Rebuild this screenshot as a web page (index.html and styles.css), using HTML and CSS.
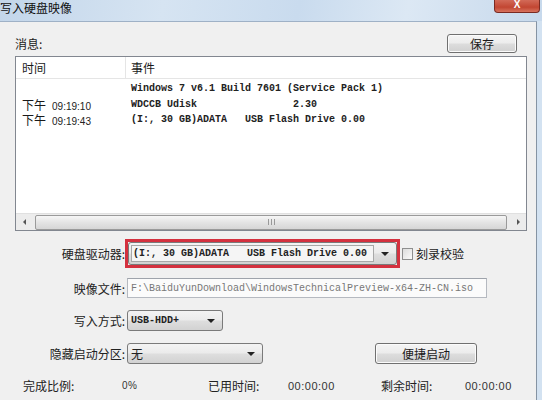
FILE: index.html
```html
<!DOCTYPE html>
<html lang="zh-CN">
<head>
    <meta charset="UTF-8">
    <title>写入硬盘映像</title>
    <link rel="stylesheet" href="styles.css">
</head>
<body>
<div class="window">
    <!--标题栏-->
    <div class="titlebar">
        <span class="title">写入硬盘映像</span>
        <span class="close">X</span>
    </div>
    <div class="client">
        <!--消息-->
        <div class="msg-head">
            <span>消息:</span>
            <span class="btn save">保存</span>
        </div>
        <div class="list">
            <div class="list-head">
                <span class="col-time">时间</span>
                <span class="col-event">事件</span>
            </div>
            <div class="list-rows">
                <div class="row"><span class="col-time"></span><span class="col-event">Windows 7 v6.1 Build 7601 (Service Pack 1)</span></div>
                <div class="row"><span class="col-time">下午<i>09:19:10</i></span><span class="col-event">WDCCB Udisk                2.30</span></div>
                <div class="row"><span class="col-time">下午<i>09:19:43</i></span><span class="col-event">(I:, 30 GB)ADATA   USB Flash Drive 0.00</span></div>
            </div>
            <div class="hscroll">
                <span class="arrow left"></span>
                <span class="thumb"><b></b></span>
                <span class="arrow right"></span>
            </div>
        </div>
        <!--设置-->
        <div class="form">
            <div class="form-row first">
                <span class="label">硬盘驱动器:</span>
                <span class="mark">
                    <span class="combo drive">
                        <span class="combo-text">(I:, 30 GB)ADATA   USB Flash Drive 0.00</span>
                        <span class="combo-btn"><em></em></span>
                    </span>
                </span>
                <span class="check"></span>
                <span class="check-text">刻录校验</span>
            </div>
            <div class="form-row">
                <span class="label">映像文件:</span>
                <span class="textbox">F:\BaiduYunDownload\WindowsTechnicalPreview-x64-ZH-CN.iso</span>
            </div>
            <div class="form-row">
                <span class="label">写入方式:</span>
                <span class="combo plain mode">
                    <span class="combo-text">USB-HDD+</span>
                    <span class="combo-btn"><em></em></span>
                </span>
            </div>
            <div class="form-row">
                <span class="label">隐藏启动分区:</span>
                <span class="combo plain hide">
                    <span class="combo-text cn">无</span>
                    <span class="combo-btn"><em></em></span>
                </span>
                <span class="btn quick">便捷启动</span>
            </div>
        </div>
        <!--进度-->
        <div class="status">
            <span>完成比例:</span>
            <span class="num small">0%</span>
            <span>已用时间:</span>
            <span class="num">00:00:00</span>
            <span>剩余时间:</span>
            <span class="num">00:00:00</span>
        </div>
    </div>
</div>
</body>
</html>
```

FILE: styles.css
```css
*{
    margin: 0;
    padding: 0;
    box-sizing: border-box;
}
body{
    width: 542px;
    height: 400px;
    overflow: hidden;
    background-color: #d3e2f1;
    font-family: "Noto Sans CJK SC", "Liberation Sans", sans-serif;
    font-size: 12px;
    color: #1a1a1a;
}
.window{
    height: 400px;
    display: flex;
    flex-direction: column;
}
/* 标题栏 */
.titlebar{
    height: 21px;
    display: flex;
    justify-content: space-between;
    align-items: flex-start;
    background: linear-gradient(100deg, #c3d6ea 0%, #d6e4f2 30%, #c9dbee 55%, #dce8f4 75%, #c7d9ec 100%);
}
.title{
    line-height: 16px;
    color: #111;
}
.close{
    width: 46px;
    height: 13px;
    margin-right: 2px;
    border: 1px solid #7a2a22;
    border-top: none;
    border-radius: 0 0 4px 4px;
    background: linear-gradient(#d26a58, #c24632 60%, #d7735e);
    color: #fff;
    font: bold 10px/9px "Liberation Sans", sans-serif;
    text-align: center;
}
.client{
    flex: 1;
    margin-right: 5px;
    padding: 0 9px 0 15px;
    background-color: #f0f0f0;
    border-top: 1px solid #9fb1c6;
    border-right: 1px solid #8593a3;
}
.msg-head{
    margin-top: 12px;
    display: flex;
    justify-content: space-between;
    align-items: center;
}
.btn{
    display: flex;
    align-items: center;
    justify-content: center;
    border: 1px solid #707070;
    border-radius: 3px;
    background: linear-gradient(#f4f4f4, #ececec 48%, #dddddd 52%, #d0d0d0);
    box-shadow: inset 0 0 0 1px #fbfbfb;
}
.save{
    width: 70px;
    height: 19px;
    margin-right: 10px;
}
/* 列表 */
.list{
    margin-top: 3px;
    height: 175px;
    border: 1px solid #828790;
    background-color: #fff;
    display: flex;
    flex-direction: column;
}
.list-head{
    height: 22px;
    display: grid;
    grid-template-columns: 110px 1fr;
    align-items: center;
    border-bottom: 1px solid #e5e5e5;
}
.list-head .col-time{
    height: 100%;
    display: flex;
    align-items: center;
    border-right: 1px solid #e5e5e5;
}
.col-time{
    padding-left: 6px;
}
.col-event{
    padding-left: 5px;
}
.list-rows{
    flex: 1;
    padding-top: 2px;
}
.row{
    display: grid;
    grid-template-columns: 110px 1fr;
    height: 15.5px;
    line-height: 15.5px;
}
.row .col-time{
    font-size: 12px;
}
.row .col-time i{
    font-style: normal;
    font-family: "Liberation Sans", sans-serif;
    font-size: 10px;
    margin-left: 6px;
    color: #222;
}
.row .col-event{
    font-family: "Liberation Mono", monospace;
    font-size: 10px;
    font-weight: bold;
    white-space: pre;
    color: #222;
}
.hscroll{
    height: 17px;
    display: flex;
    align-items: center;
    background-color: #ececec;
    border-top: 1px solid #e0e0e0;
}
.arrow{
    width: 17px;
    height: 16px;
    position: relative;
}
.arrow.left::after,
.arrow.right::after{
    content: "";
    position: absolute;
    top: 5px;
    border: 3px solid transparent;
}
.arrow.left::after{
    left: 4px;
    border-right: 3px solid #555;
}
.arrow.right::after{
    left: 8px;
    border-left: 3px solid #555;
}
.thumb{
    height: 15px;
    margin: 0 2px;
    flex: 1;
    border: 1px solid #9a9a9a;
    border-radius: 2px;
    background: linear-gradient(#f6f6f6, #e4e4e4 50%, #d6d6d6);
    display: flex;
    justify-content: center;
    align-items: center;
}
.thumb b{
    width: 7px;
    height: 6px;
    border-left: 1px solid #999;
    border-right: 1px solid #999;
    background: linear-gradient(90deg, transparent 2px, #999 2px, #999 3px, transparent 3px);
}
/* 表单 */
.form{
    margin-top: 8px;
}
.form-row{
    display: flex;
    align-items: center;
    margin-top: 12px;
}
.form-row.first{
    margin-top: 0;
}
.form-row:nth-child(2){
    margin-top: 10px;
}
.label{
    width: 110px;
    text-align: right;
    color: #222;
}
.mark{
    border: 3px solid #d4313f;
    display: flex;
}
.combo{
    display: flex;
    height: 23px;
    border: 1px solid #7a7a7a;
    border-radius: 3px;
    background: linear-gradient(#f3f3f3, #ebebeb 48%, #dedede 52%, #d2d2d2);
}
.combo-text{
    flex: 1;
    padding-left: 3px;
    display: flex;
    align-items: center;
    font-family: "Liberation Mono", monospace;
    font-size: 10px;
    font-weight: bold;
    white-space: pre;
    color: #222;
}
.combo-text.cn{
    font-family: "Noto Sans CJK SC", sans-serif;
    font-size: 12px;
    font-weight: normal;
}
.combo-btn{
    width: 22px;
    display: flex;
    align-items: center;
    justify-content: center;
}
.combo-btn em{
    border: 4px solid transparent;
    border-top: 4px solid #222;
    border-bottom: none;
    margin-top: 1px;
}
.drive{
    width: 269px;
}
.drive .combo-text{
    margin: 2px 0 2px 2px;
    padding-left: 1px;
    border: 1px solid #a8a8a8;
    background-color: #f5f5f5;
}
.plain{
    height: 21px;
    margin-left: 2px;
}
.mode{
    width: 96px;
}
.hide{
    width: 136px;
}
.check{
    width: 11px;
    height: 12px;
    margin-left: 2px;
    border: 1px solid #8e8f8f;
    background: linear-gradient(135deg, #dcdcdc, #fbfbfb);
}
.check-text{
    margin-left: 3px;
}
.textbox{
    width: 360px;
    height: 20px;
    margin-left: 2px;
    padding-left: 3px;
    display: flex;
    align-items: center;
    border: 1px solid #b5b9c0;
    border-top-color: #9ea3ab;
    background-color: #fbfbfb;
    font-family: "Liberation Mono", monospace;
    font-size: 10px;
    color: #777;
}
.quick{
    width: 102px;
    height: 21px;
    margin-left: 112px;
}
/* 进度 */
.status{
    margin-top: 13px;
    padding-left: 8px;
    display: grid;
    grid-template-columns: 99px 86px 80px 93px 84px 1fr;
    align-items: center;
    color: #222;
}
.num{
    font-family: "Liberation Sans", sans-serif;
    font-size: 11px;
    letter-spacing: 0.5px;
    color: #333;
}
.num.small{
    font-size: 10px;
}
```
